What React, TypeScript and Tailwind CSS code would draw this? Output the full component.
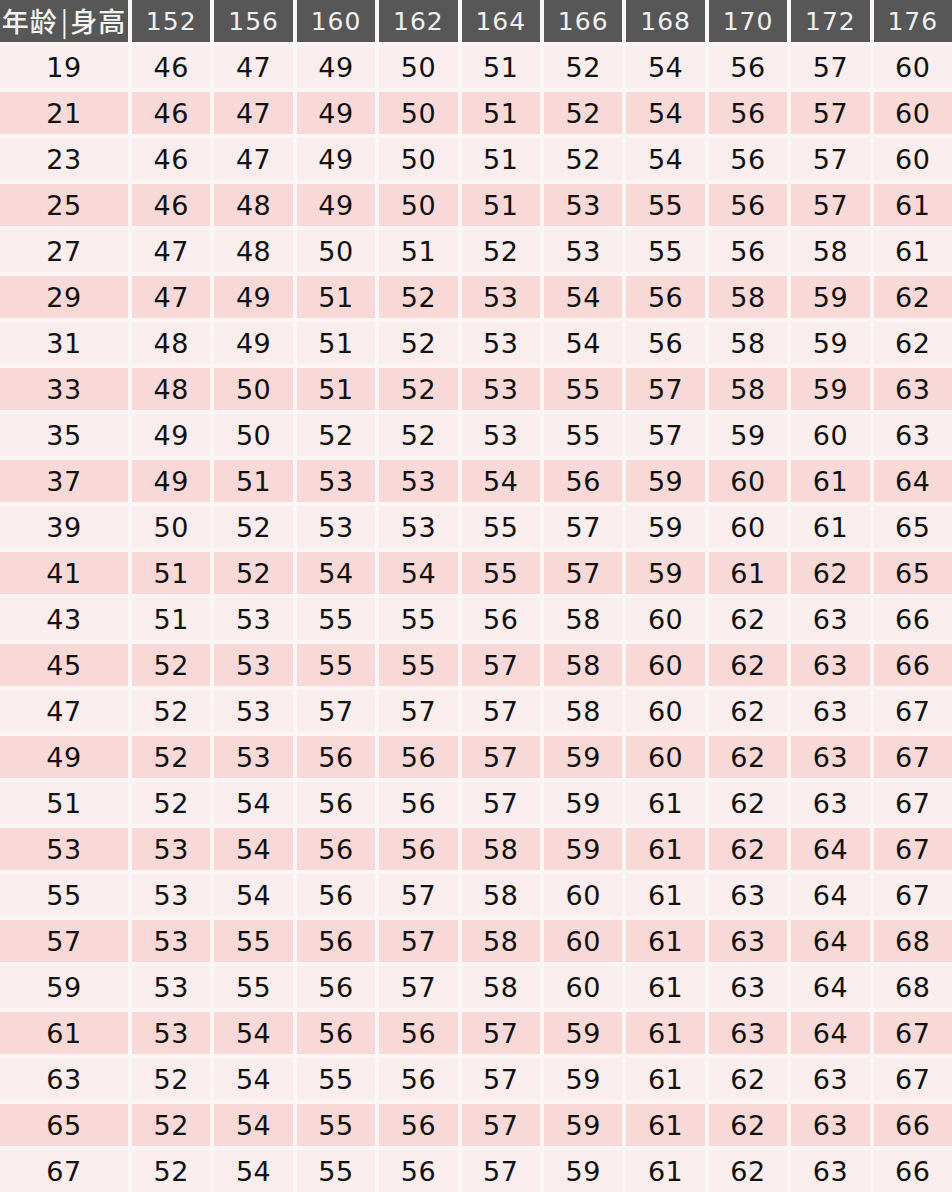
const HEIGHTS = [152, 156, 160, 162, 164, 166, 168, 170, 172, 176];

const ROWS: [number, number[]][] = [
  [19, [46, 47, 49, 50, 51, 52, 54, 56, 57, 60]],
  [21, [46, 47, 49, 50, 51, 52, 54, 56, 57, 60]],
  [23, [46, 47, 49, 50, 51, 52, 54, 56, 57, 60]],
  [25, [46, 48, 49, 50, 51, 53, 55, 56, 57, 61]],
  [27, [47, 48, 50, 51, 52, 53, 55, 56, 58, 61]],
  [29, [47, 49, 51, 52, 53, 54, 56, 58, 59, 62]],
  [31, [48, 49, 51, 52, 53, 54, 56, 58, 59, 62]],
  [33, [48, 50, 51, 52, 53, 55, 57, 58, 59, 63]],
  [35, [49, 50, 52, 52, 53, 55, 57, 59, 60, 63]],
  [37, [49, 51, 53, 53, 54, 56, 59, 60, 61, 64]],
  [39, [50, 52, 53, 53, 55, 57, 59, 60, 61, 65]],
  [41, [51, 52, 54, 54, 55, 57, 59, 61, 62, 65]],
  [43, [51, 53, 55, 55, 56, 58, 60, 62, 63, 66]],
  [45, [52, 53, 55, 55, 57, 58, 60, 62, 63, 66]],
  [47, [52, 53, 57, 57, 57, 58, 60, 62, 63, 67]],
  [49, [52, 53, 56, 56, 57, 59, 60, 62, 63, 67]],
  [51, [52, 54, 56, 56, 57, 59, 61, 62, 63, 67]],
  [53, [53, 54, 56, 56, 58, 59, 61, 62, 64, 67]],
  [55, [53, 54, 56, 57, 58, 60, 61, 63, 64, 67]],
  [57, [53, 55, 56, 57, 58, 60, 61, 63, 64, 68]],
  [59, [53, 55, 56, 57, 58, 60, 61, 63, 64, 68]],
  [61, [53, 54, 56, 56, 57, 59, 61, 63, 64, 67]],
  [63, [52, 54, 55, 56, 57, 59, 61, 62, 63, 67]],
  [65, [52, 54, 55, 56, 57, 59, 61, 62, 63, 66]],
  [67, [52, 54, 55, 56, 57, 59, 61, 62, 63, 66]],
];

export default function App() {
  return (
    <div className="w-[952px] h-[1192px] overflow-hidden bg-[#fbf6f6] font-['DejaVu_Sans',sans-serif]">
      <div className="grid grid-cols-[128px_repeat(10,1fr)] gap-x-[4px] gap-y-[4px]">
        <div className="h-[42px] bg-[#575757] flex items-center justify-center text-[#f4f4f4] text-[27px] font-medium font-['Noto_Sans_CJK_SC',sans-serif] tracking-[1px] whitespace-nowrap overflow-hidden">
          <span>年龄</span>
          <span className="ml-[3px] mr-[1px] font-normal">|</span>
          <span>身高</span>
        </div>
        {HEIGHTS.map((h) => (
          <div
            key={h}
            className="h-[42px] bg-[#575757] flex items-center justify-center pt-[2px] text-[#f0f0f0] text-[25px] tracking-[1px]"
          >
            {h}
          </div>
        ))}
        {ROWS.map(([age, vals], i) => {
          const bg = i % 2 === 1 ? "bg-[#f8d9d8]" : "bg-[#f9eded]";
          return [
            <div
              key={`a${age}`}
              className={`h-[42px] ${bg} flex items-center justify-center pt-[3px] text-[#111] text-[27px] tracking-[0.5px]`}
            >
              {age}
            </div>,
            ...vals.map((v, j) => (
              <div
                key={`${age}-${j}`}
                className={`h-[42px] ${bg} flex items-center justify-center pt-[3px] text-[#111] text-[27px] tracking-[0.5px]`}
              >
                {v}
              </div>
            )),
          ];
        })}
      </div>
    </div>
  );
}
